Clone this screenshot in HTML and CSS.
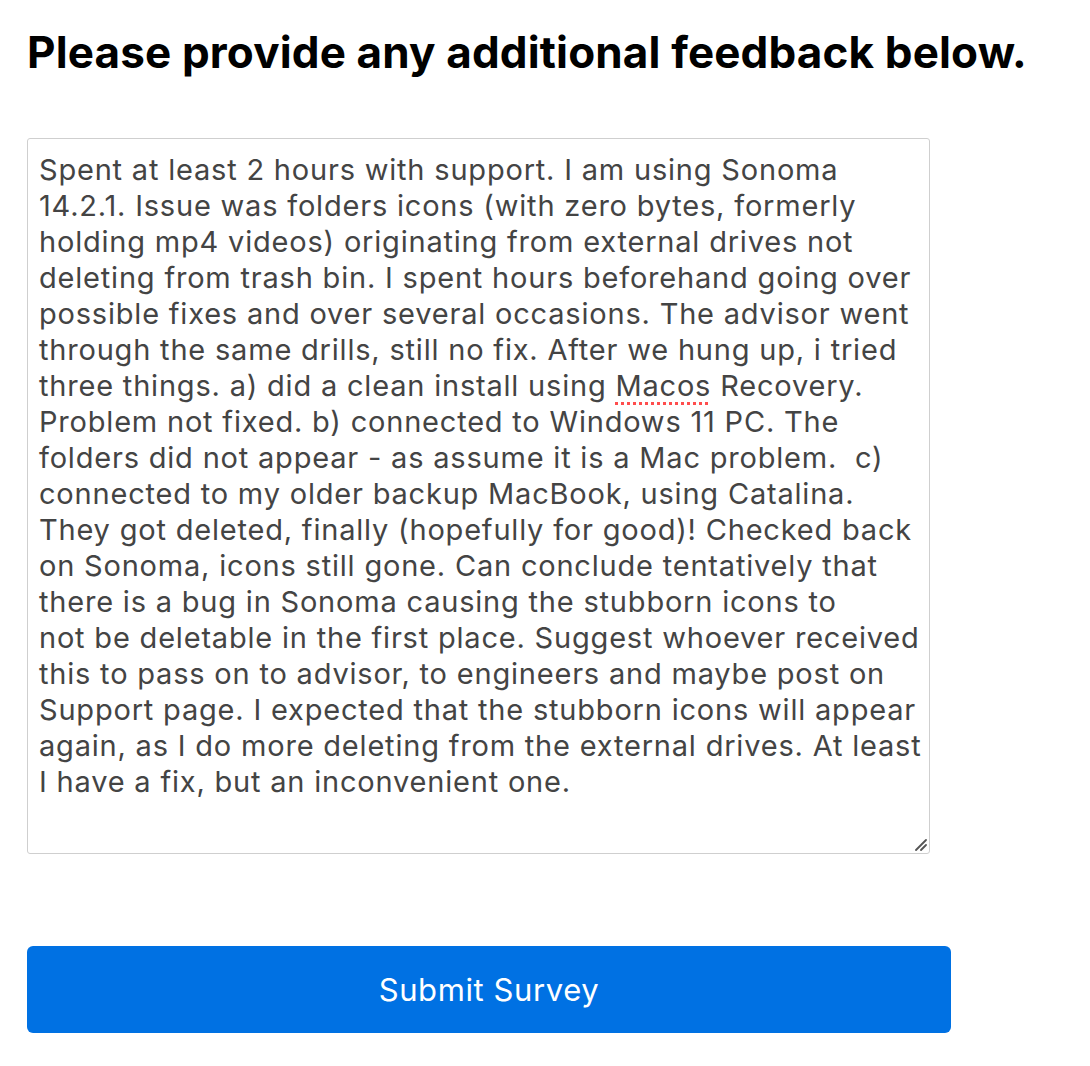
FILE: index.html
```html
<!DOCTYPE html>
<html>
<head>
<meta charset="utf-8">
<link rel="stylesheet" href="styles.css">
</head>
<body>
<main class="page">
  <h1 class="title">Please provide any additional feedback below.</h1>
  <div class="feedback">
    <div class="feedback-text">Spent at least 2 hours with support. I am using Sonoma
14.2.1. Issue was folders icons (with zero bytes, formerly
holding mp4 videos) originating from external drives not
deleting from trash bin. I spent hours beforehand going over
possible fixes and over several occasions. The advisor went
through the same drills, still no fix. After we hung up, i tried
three things. a) did a clean install using <span class="misspelled">Macos</span> Recovery.
Problem not fixed. b) connected to Windows 11 PC. The
folders did not appear - as assume it is a Mac problem.  c)
connected to my older backup MacBook, using Catalina.
They got deleted, finally (hopefully for good)! Checked back
on Sonoma, icons still gone. Can conclude tentatively that
there is a bug in Sonoma causing the stubborn icons to
not be deletable in the first place. Suggest whoever received
this to pass on to advisor, to engineers and maybe post on
Support page. I expected that the stubborn icons will appear
again, as I do more deleting from the external drives. At least
I have a fix, but an inconvenient one.</div>
    <svg class="grip" width="14" height="14" viewBox="0 0 14 14"><path d="M13 3 L3 13 M13 8 L8 13" stroke="#555" stroke-width="1.8" stroke-linecap="round"/></svg>
  </div>
  <button class="submit">Submit Survey</button>
</main>
</body>
</html>
```
FILE: styles.css
```css
html, body { margin: 0; padding: 0; background: #fff; }
body { font-family: Inter, "Liberation Sans", sans-serif; }
.page { padding: 24px 0 0 27px; display: flex; flex-direction: column; align-items: flex-start; }
.title { margin: 0; font-size: 44px; font-weight: 700; line-height: 57px; color: #000; letter-spacing: 0.15px; }
.feedback { position: relative; margin-top: 57px; width: 903px; height: 716px; box-sizing: border-box; border: 1px solid #cfcfcf; border-radius: 3px; padding: 13px 11px; }
.feedback-text { white-space: pre; font-size: 29px; line-height: 36px; color: #444; letter-spacing: 0.8px; }
.misspelled { text-decoration: underline dotted #ff4d4d; text-decoration-thickness: 3px; text-underline-offset: 6px; }
.grip { position: absolute; right: 2px; bottom: 2px; }
.submit { margin-top: 92px; width: 924px; height: 87px; border: none; border-radius: 6px; background: #0071e3; color: #fff; font-family: Inter, "Liberation Sans", sans-serif; font-size: 31px; letter-spacing: 0.6px; }
```
